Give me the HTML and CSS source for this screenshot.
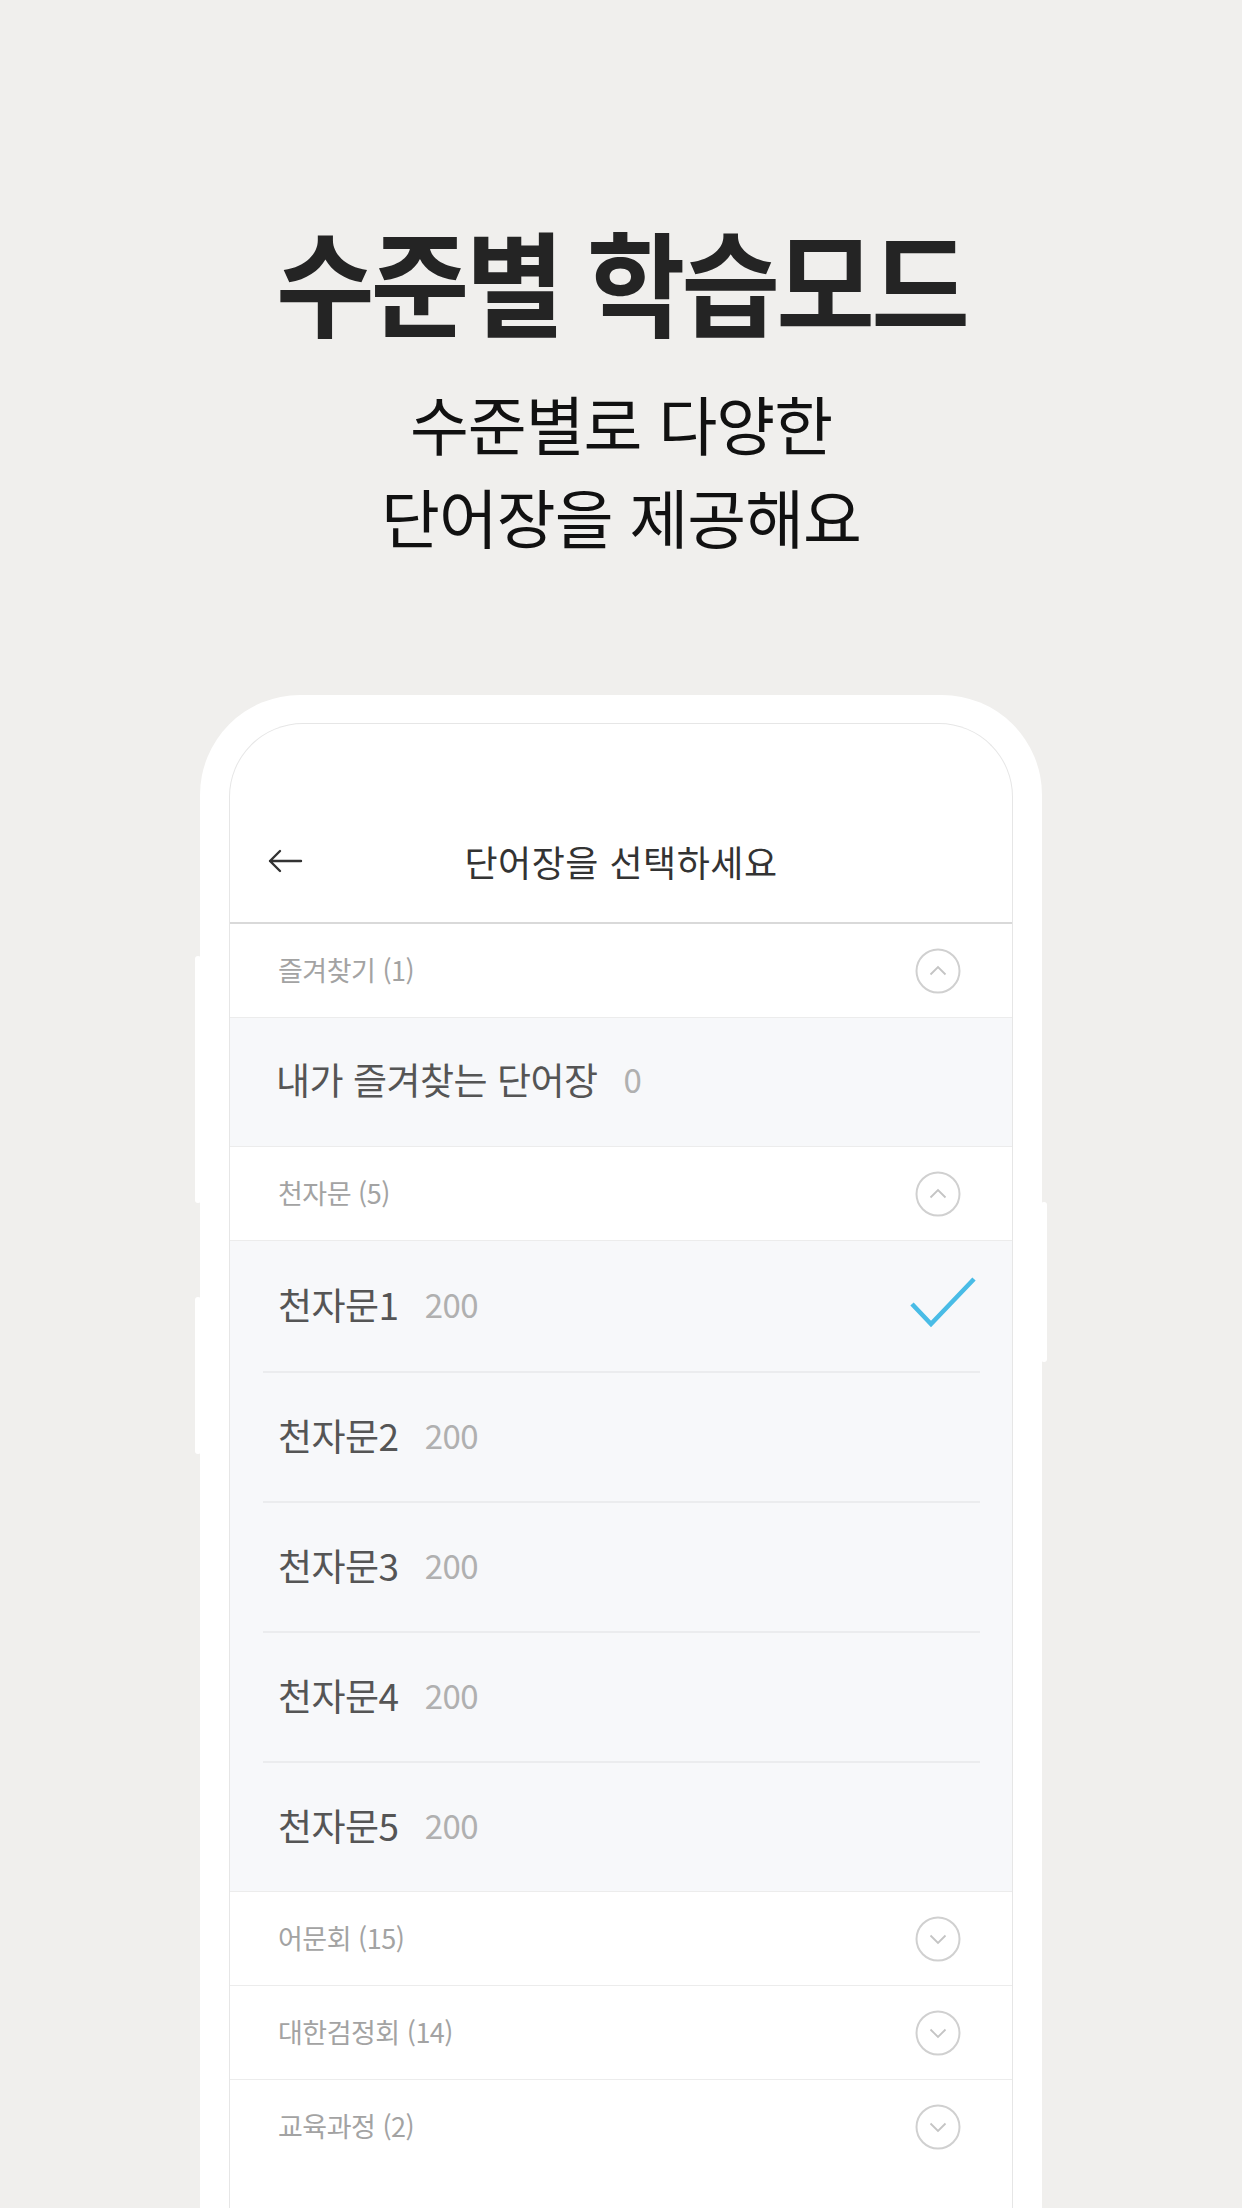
FILE: index.html
```html
<!DOCTYPE html>
<html lang="ko">
<head>
<meta charset="utf-8">
<title>수준별 학습모드</title>
<link rel="stylesheet" href="styles.css">
</head>
<body>
<div class="page">
  <header class="hero">
    <h1 class="hero-title">수준별 학습모드</h1>
    <p class="hero-sub">수준별로 다양한<br>단어장을 제공해요</p>
  </header>

  <div class="phone">
    <span class="side-btn side-l1"></span>
    <span class="side-btn side-l2"></span>
    <span class="side-btn side-r1"></span>
    <div class="screen">
      <div class="status"></div>
      <div class="topbar">
        <svg class="back" viewBox="0 0 36 24" width="36" height="24"><path d="M34 12H3M13 2L3 12l10 10" fill="none" stroke="#333" stroke-width="2.4" stroke-linecap="round" stroke-linejoin="round"/></svg>
        <h2 class="topbar-title">단어장을 선택하세요</h2>
      </div>

      <section class="group">
        <div class="group-head"><span>즐겨찾기 (1)</span>
          <svg class="toggle" viewBox="0 0 46 46" width="46" height="46"><circle cx="23" cy="23" r="21.5" fill="none" stroke="#d0d0d0" stroke-width="2"/><path d="M15.5 26.5l7.5-7.5 7.5 7.5" fill="none" stroke="#c4c4c4" stroke-width="1.8"/></svg>
        </div>
        <ul class="items">
          <li class="item item-fav"><span class="name">내가 즐겨찾는 단어장</span><span class="count">0</span></li>
        </ul>
      </section>

      <section class="group">
        <div class="group-head"><span>천자문 (5)</span>
          <svg class="toggle" viewBox="0 0 46 46" width="46" height="46"><circle cx="23" cy="23" r="21.5" fill="none" stroke="#d0d0d0" stroke-width="2"/><path d="M15.5 26.5l7.5-7.5 7.5 7.5" fill="none" stroke="#c4c4c4" stroke-width="1.8"/></svg>
        </div>
        <ul class="items items-inset">
          <li class="item"><span class="name">천자문1</span><span class="count">200</span>
            <svg class="check" viewBox="0 0 66 54" width="66" height="54"><path d="M2 28l19 20L64 3" fill="none" stroke="#49bce6" stroke-width="4.6"/></svg>
          </li>
          <li class="item"><span class="name">천자문2</span><span class="count">200</span></li>
          <li class="item"><span class="name">천자문3</span><span class="count">200</span></li>
          <li class="item"><span class="name">천자문4</span><span class="count">200</span></li>
          <li class="item"><span class="name">천자문5</span><span class="count">200</span></li>
        </ul>
      </section>

      <section class="group">
        <div class="group-head"><span>어문회 (15)</span>
          <svg class="toggle" viewBox="0 0 46 46" width="46" height="46"><circle cx="23" cy="23" r="21.5" fill="none" stroke="#d0d0d0" stroke-width="2"/><path d="M15.5 19.5l7.5 7.5 7.5-7.5" fill="none" stroke="#c4c4c4" stroke-width="1.8"/></svg>
        </div>
      </section>
      <section class="group">
        <div class="group-head"><span>대한검정회 (14)</span>
          <svg class="toggle" viewBox="0 0 46 46" width="46" height="46"><circle cx="23" cy="23" r="21.5" fill="none" stroke="#d0d0d0" stroke-width="2"/><path d="M15.5 19.5l7.5 7.5 7.5-7.5" fill="none" stroke="#c4c4c4" stroke-width="1.8"/></svg>
        </div>
      </section>
      <section class="group">
        <div class="group-head group-head-last"><span>교육과정 (2)</span>
          <svg class="toggle" viewBox="0 0 46 46" width="46" height="46"><circle cx="23" cy="23" r="21.5" fill="none" stroke="#d0d0d0" stroke-width="2"/><path d="M15.5 19.5l7.5 7.5 7.5-7.5" fill="none" stroke="#c4c4c4" stroke-width="1.8"/></svg>
        </div>
      </section>
    </div>
  </div>
</div>
</body>
</html>
```

FILE: styles.css
```css
* { box-sizing: border-box; }

html, body {
  margin: 0;
  padding: 0;
}

body {
  background: #f0efed;
  font-family: "Noto Sans CJK KR", "Noto Sans", sans-serif;
  color: #222;
}

.page {
  width: 1242px;
  height: 2208px;
  overflow: hidden;
}

.hero {
  padding-top: 222px;
  text-align: center;
}

.hero-title {
  margin: 0;
  font-size: 114px;
  line-height: 1;
  font-weight: 700;
  color: #242424;
  letter-spacing: -4px;
  transform: scaleX(0.94);
}

.hero-sub {
  margin: 40px 0 0;
  font-size: 64px;
  line-height: 93px;
  font-weight: 400;
  color: #111;
  letter-spacing: -1px;
}

.phone {
  position: relative;
  margin: 133px 0 0 200px;
  width: 842px;
  height: 1600px;
  background: #fff;
  border-radius: 100px 100px 0 0;
  padding: 28px 29px 0;
}

.side-btn {
  position: absolute;
  width: 6px;
  background: #fff;
  border-radius: 3px;
}
.side-l1 { left: -5px; top: 261px; height: 247px; }
.side-l2 { left: -5px; top: 602px; height: 157px; }
.side-r1 { right: -5px; top: 507px; height: 160px; }

.screen {
  height: 100%;
  border: 1px solid #e6e6e6;
  border-bottom: none;
  border-radius: 74px 74px 0 0;
  overflow: hidden;
  background: #fff;
}

.status { height: 76px; }

.topbar {
  position: relative;
  height: 124px;
  border-bottom: 2px solid #d9d9d9;
  display: flex;
  align-items: center;
  justify-content: center;
}

.back {
  position: absolute;
  left: 37px;
  top: 49px;
}

.topbar-title {
  margin: 0;
  font-size: 36px;
  font-weight: 400;
  color: #333;
  letter-spacing: 0.5px;
}

.group-head {
  height: 94px;
  border-bottom: 1px solid #ececec;
  display: flex;
  align-items: center;
  justify-content: space-between;
  padding: 0 51px 0 48px;
  font-size: 27px;
  color: #a3a3a3;
  letter-spacing: -0.5px;
}

.group-head > span { padding-bottom: 3px; }

.group-head-last { border-bottom: none; }

.toggle { display: block; }

.items {
  list-style: none;
  margin: 0;
  padding: 0;
  background: #f7f8fa;
  border-bottom: 1px solid #ececec;
}

.items-inset { padding: 0 32px 0 33px; }

.item {
  position: relative;
  height: 130px;
  display: flex;
  align-items: center;
  padding-left: 15px;
  padding-bottom: 4px;
  font-size: 37px;
  color: #555;
  letter-spacing: -0.5px;
}

.items-inset .item + .item { border-top: 2px solid #ebecee; }

.item-fav {
  height: 128px;
  padding-left: 46px;
  padding-bottom: 7px;
  font-size: 37px;
  letter-spacing: -0.5px;
}

.count {
  margin-left: 26px;
  color: #b0b0b0;
  font-size: 33px;
}

.check {
  position: absolute;
  right: 4px;
  top: 35px;
}
```
